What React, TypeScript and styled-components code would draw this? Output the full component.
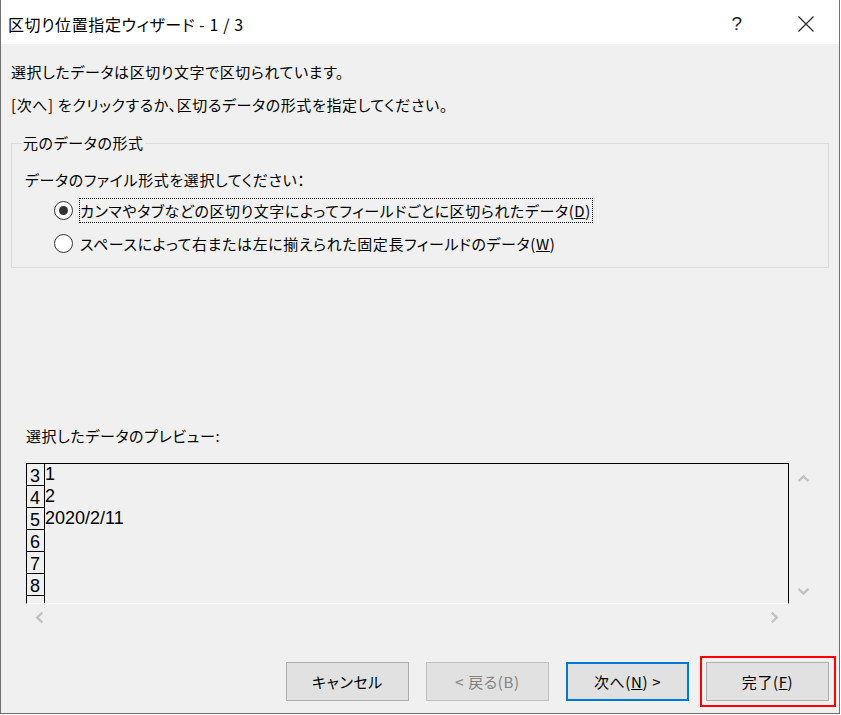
import React from 'react'
import styled, { createGlobalStyle } from 'styled-components'

const GlobalStyle = createGlobalStyle`
  html, body {
    margin: 0;
    padding: 0;
    background: #ffffff;
  }
  body {
    font-family: "Noto Sans CJK JP", "Noto Sans", sans-serif;
    font-feature-settings: "palt";
    letter-spacing: 0.6px;
    color: #000;
  }
`

const Window = styled.div`
  box-sizing: border-box;
  width: 840px;
  height: 714px;
  background: #f0f0f0;
  border-left: 1px solid #6f6f6f;
  border-right: 1px solid #6f6f6f;
  border-bottom: 1px solid #6f6f6f;
  display: flex;
  flex-direction: column;
`

const TitleBar = styled.div`
  height: 44px;
  background: #ffffff;
  display: flex;
  align-items: center;
  padding: 3px 10px 0 7px;
  box-sizing: border-box;
`

const Title = styled.div`
  flex: 1;
  font-size: 16px;
  line-height: 20px;
`

const CaptionButton = styled.div`
  width: 46px;
  height: 32px;
  display: flex;
  align-items: center;
  justify-content: center;
  font-family: "Liberation Sans", sans-serif;
  font-size: 19px;
  color: #222;
`

const Content = styled.div`
  flex: 1;
  display: flex;
  flex-direction: column;
  padding: 0 10px;
`

const Message = styled.div<{ $top: number }>`
  margin-top: ${(p) => p.$top}px;
  font-size: 15px;
  line-height: 20px;
`

const GroupBox = styled.fieldset`
  margin: 18px 0 0;
  padding: 0 0 11px 13px;
  border: 1px solid #dcdcdc;
  min-width: 0;
`

const Legend = styled.legend`
  margin-left: -3px;
  padding: 0 1px;
  font-size: 15px;
  line-height: 20px;
`

const GroupText = styled.div`
  margin-top: 17px;
  font-size: 15px;
  line-height: 20px;
`

const RadioRow = styled.div`
  display: flex;
  align-items: center;
  margin: 8px 0 0 29px;
`

const RadioCircle = styled.span<{ $checked?: boolean }>`
  box-sizing: border-box;
  flex: none;
  width: 19px;
  height: 19px;
  border-radius: 50%;
  border: 1px solid #333333;
  background: #ffffff;
  margin-right: 6px;
  display: flex;
  align-items: center;
  justify-content: center;
  &::after {
    content: '';
    width: 9px;
    height: 9px;
    border-radius: 50%;
    background: ${(p) => (p.$checked ? '#333333' : 'transparent')};
  }
`

const RadioLabel = styled.span<{ $focused?: boolean }>`
  box-sizing: border-box;
  height: 25px;
  padding: 0 1px 0 0;
  display: flex;
  align-items: center;
  font-size: 15px;
  border: 1px dotted ${(p) => (p.$focused ? '#000' : 'transparent')};
`

const PreviewLabel = styled.div`
  margin: 158px 0 0 15px;
  font-size: 15px;
  line-height: 20px;
`

const PreviewArea = styled.div`
  margin: 17px 0 0 15px;
  display: grid;
  grid-template-columns: 763px 28px;
  grid-template-rows: 141px 27px;
`

const PreviewBox = styled.div`
  box-sizing: border-box;
  border-top: 1px solid #000;
  border-left: 1px solid #000;
  border-right: 1px solid #000;
  border-bottom: 1px solid #ffffff;
  overflow: hidden;
  font-family: "Liberation Sans", sans-serif;
  letter-spacing: 0;
  font-size: 18px;
`

const PreviewRow = styled.div`
  display: flex;
  height: 22px;
`

const RowNumber = styled.div`
  box-sizing: border-box;
  width: 18px;
  height: 22px;
  border-right: 1px solid #000;
  border-bottom: 1px solid #000;
  padding-left: 3px;
  line-height: 25px;
`

const RowValue = styled.div`
  line-height: 21px;
`

const VScroll = styled.div`
  display: flex;
  flex-direction: column;
  align-items: center;
  justify-content: space-between;
  padding: 9px 0 6px;
`

const HScroll = styled.div`
  display: flex;
  align-items: center;
  justify-content: space-between;
  padding: 0 8px 0 7px;
`

const ButtonRow = styled.div`
  margin-top: 31px;
  display: flex;
  justify-content: flex-end;
  gap: 17px;
  padding-right: 0;
`

const Button = styled.div<{ $disabled?: boolean; $default?: boolean }>`
  box-sizing: border-box;
  width: 123px;
  height: 39px;
  display: flex;
  align-items: center;
  justify-content: center;
  background: #e1e1e1;
  font-size: 15px;
  color: ${(p) => (p.$disabled ? '#838383' : '#000')};
  border: ${(p) =>
    p.$default ? '2px solid #0078d7' : p.$disabled ? '1px solid #bfbfbf' : '1px solid #adadad'};
`

const Highlight = styled.div`
  position: relative;
  &::after {
    content: '';
    position: absolute;
    left: -6px;
    right: -7px;
    top: -6px;
    bottom: -6px;
    border: 2px solid #ff0000;
  }
`

const Chevron: React.FC<{ dir: 'up' | 'down' | 'left' | 'right' }> = ({ dir }) => {
  const rot = { up: 0, right: 90, down: 180, left: 270 }[dir]
  return (
    <svg width="13" height="13" viewBox="0 0 12 12" style={{ transform: `rotate(${rot}deg)` }}>
      <path d="M1.5 8.5 L6 4 L10.5 8.5" fill="none" stroke="#c2c2c2" strokeWidth="2.2" />
    </svg>
  )
}

const rows: [string, string][] = [
  ['3', '1'],
  ['4', '2'],
  ['5', '2020/2/11'],
  ['6', ''],
  ['7', ''],
  ['8', ''],
  ['', ''],
]

export default function App() {
  return (
    <>
      <GlobalStyle />
      <Window>
        <TitleBar>
          <Title>区切り位置指定ウィザード - 1 / 3</Title>
          <CaptionButton>?</CaptionButton>
          <CaptionButton style={{ marginLeft: 23 }}>
            <svg width="16" height="16" viewBox="0 0 16 16">
              <path d="M0.5 0.5 L15.5 15.5 M15.5 0.5 L0.5 15.5" stroke="#222" strokeWidth="1.1" />
            </svg>
          </CaptionButton>
        </TitleBar>
        <Content>
          <Message $top={18}>選択したデータは区切り文字で区切られています。</Message>
          <Message $top={13}>[次へ] をクリックするか、区切るデータの形式を指定してください。</Message>
          <GroupBox>
            <Legend>元のデータの形式</Legend>
            <GroupText>データのファイル形式を選択してください：</GroupText>
            <RadioRow>
              <RadioCircle $checked />
              <RadioLabel $focused>
                カンマやタブなどの区切り文字によってフィールドごとに区切られたデータ(<u>D</u>)
              </RadioLabel>
            </RadioRow>
            <RadioRow>
              <RadioCircle />
              <RadioLabel>
                スペースによって右または左に揃えられた固定長フィールドのデータ(<u>W</u>)
              </RadioLabel>
            </RadioRow>
          </GroupBox>
          <PreviewLabel>選択したデータのプレビュー:</PreviewLabel>
          <PreviewArea>
            <PreviewBox>
              {rows.map(([n, v], i) => (
                <PreviewRow key={i}>
                  <RowNumber>{n}</RowNumber>
                  <RowValue>{v}</RowValue>
                </PreviewRow>
              ))}
            </PreviewBox>
            <VScroll>
              <Chevron dir="up" />
              <Chevron dir="down" />
            </VScroll>
            <HScroll>
              <Chevron dir="left" />
              <Chevron dir="right" />
            </HScroll>
          </PreviewArea>
          <ButtonRow>
            <Button>キャンセル</Button>
            <Button $disabled>&lt; 戻る(B)</Button>
            <Button $default>
              次へ(<u>N</u>) &gt;
            </Button>
            <Highlight>
              <Button>
                完了(<u>F</u>)
              </Button>
            </Highlight>
          </ButtonRow>
        </Content>
      </Window>
    </>
  )
}
